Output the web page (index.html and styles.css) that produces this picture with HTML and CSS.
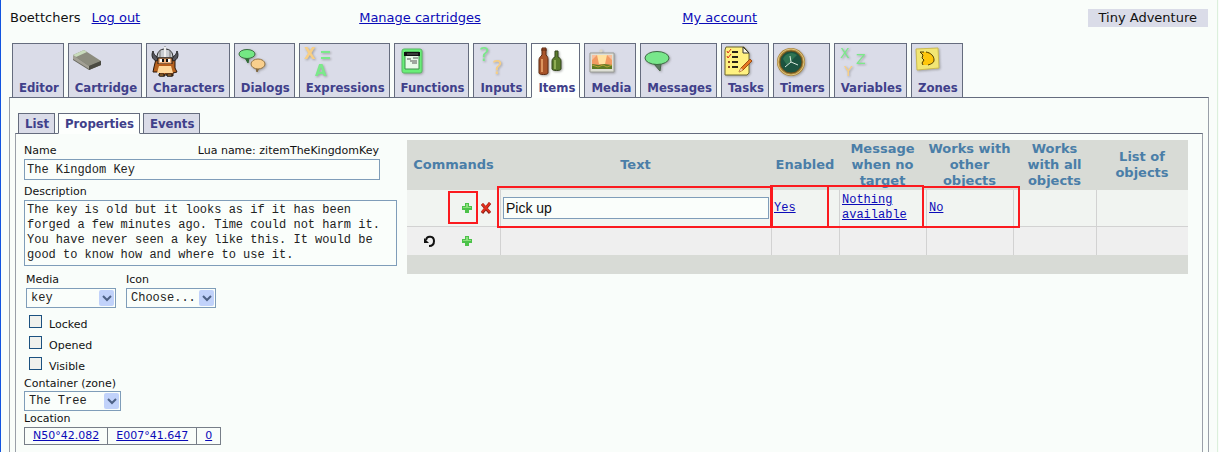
FILE: index.html
```html
<!DOCTYPE html>
<html lang="en">
<head>
<meta charset="utf-8">
<title>Tiny Adventure</title>
<link rel="stylesheet" href="styles.css">
</head>
<body>
<header class="topbar">
  <div class="user"><span>Boettchers</span><a href="#">Log out</a></div>
  <a href="#">Manage cartridges</a>
  <a href="#">My account</a>
  <div class="project">Tiny Adventure</div>
</header>

<nav class="tabs">
  <a class="tab" href="#">Editor</a>
  <a class="tab" href="#">
    <svg class="icon" viewBox="0 0 32 32"><path d="M1 10v4l16 10 12-5v-4z" fill="#66665d"/><path d="M1 9 12 4l17 11-12 5z" fill="#8c8c7e"/><path d="M1 9 12 4l3 2L4 11z" fill="#c9dcbc"/><path d="M17 20v4l12-5v-4z" fill="#4b4b42"/><path d="M1 9v4l16 10v-3z" fill="#a2a094"/></svg>
    Cartridge</a>
  <a class="tab" href="#">
    <svg class="icon" viewBox="0 0 32 32"><path d="M6 13 4 21l-1 5h5l2 2v2h5v-2h2v2h6v-3l4-1-2-4V13z" fill="#b5611e" stroke="#2b1608"/><path d="M3 5C1 9 2 14 7 15l2-4C6 11 4 9 3 5zM27 5c2 4 1 9-4 10l-2-4c3 0 5-2 6-6z" fill="#55555c" stroke="#222"/><path d="M7 12c0-6 3-9 8-9s8 3 8 9z" fill="#c9ccd0" stroke="#222"/><path d="M15 0v12M10 5v7M20 5v7" stroke="#777" fill="none"/><path d="M14 1h2v10h-2z" fill="#eee"/><path d="M8 12h14v6H8z" fill="#f0b27d" stroke="#2b1608"/><path d="M10 13h4v3h-4zM16 13h4v3h-4z" fill="#fff"/><path d="M12 13h2v3h-2zM16 13h2v3h-2z" fill="#111"/><path d="M8 18h14v2H8z" fill="#b65c1c"/><path d="M9 20h12l2 7H7z" fill="#ffd79b"/><path d="M9 28h5v2H9zM17 28h5v2h-5z" fill="#e89a3c" stroke="#111"/></svg>
    Characters</a>
  <a class="tab" href="#">
    <svg class="icon shaded" viewBox="0 0 32 32"><path d="M7 12l3 5 1-5z" fill="#2f6a35" stroke="#2f6a35"/><ellipse cx="9" cy="8" rx="8" ry="4.500" fill="#74e884" stroke="#3c6e42"/><path d="M18 22l1 4 2-4z" fill="#7c6238" stroke="#7c6238"/><ellipse cx="20" cy="18" rx="7" ry="5" fill="#f9cf8d" stroke="#927344"/></svg>
    Dialogs</a>
  <a class="tab" href="#">
    <svg class="icon shaded glyphs" viewBox="0 0 32 32"><text x="1" y="13" fill="#f8cf84">X</text><path d="M18 5h9v2h-9zM18 11h9v2h-9z" fill="#7be98a"/><text x="12" y="30" fill="#7be98a">A</text></svg>
    Expressions</a>
  <a class="tab" href="#">
    <svg class="icon shaded" viewBox="0 0 32 32"><rect x="4" y="3" width="20" height="24" rx="2" fill="#69ee78" stroke="#59ba64"/><path d="M7 6h14v17H7z" fill="#e8fae8" stroke="#3c8f48"/><path d="M6 6h16v4H6z" fill="#111"/><path d="M9 8h11" stroke="#666"/><path d="M9 13h4M15 12h5M12 15h7M14 17h5" stroke="#555" fill="none"/></svg>
    Functions</a>
  <a class="tab" href="#">
    <svg class="icon shaded glyphs" viewBox="0 0 32 32"><text x="2" y="15" class="big" fill="#7be98a">?</text><text x="15" y="28" class="big" fill="#f8cf84">?</text></svg>
    Inputs</a>
  <a class="tab active" href="#" aria-current="page">
    <svg class="icon shaded" viewBox="0 0 32 32"><path d="M7 2h4v7c2 2 2 3 2 5v13c0 2-9 2-9 0V14c0-2 1-3 3-5z" fill="#a9552a" stroke="#5d2a12"/><path d="M7 13v13" stroke="#dd955f" stroke-width="2"/><path d="M6 4h6" stroke="#5d2a12"/><path d="M20 5h3v6c2 1 3 2 3 4v8c0 2-9 2-9 0v-8c0-2 1-3 3-4z" fill="#5b7c2c" stroke="#33451c"/><path d="M20 14v9" stroke="#90ad55" stroke-width="2"/></svg>
    Items</a>
  <a class="tab" href="#">
    <svg class="icon shaded" viewBox="0 0 32 32"><path d="M13 3l2 2-2 2-2-2z" fill="#ddd7c6"/><path d="M2 7h24v19H2z" fill="#dedfd6" stroke="#9b9c97"/><path d="M4 9h20v14H4z" fill="#f29a62"/><path d="M9 9h10l-2 9h-6z" fill="#ffe1a0"/><path d="M4 9h5l-5 5zM24 9h-5l5 5z" fill="#f8bf9d"/><path d="M4 18l7 1 5-1 8 1v4H4z" fill="#5d7a24"/><path d="M4 19l6 2 5-2 4 2 5-2" stroke="#b8a434" fill="none"/></svg>
    Media</a>
  <a class="tab" href="#">
    <svg class="icon shaded" viewBox="0 0 32 32"><path d="M10 18l6 7 1-7z" fill="#5a7b5e" stroke="#476349"/><ellipse cx="13" cy="12" rx="12" ry="6.500" fill="#78e78b" stroke="#3d6a43"/></svg>
    Messages</a>
  <a class="tab" href="#">
    <svg class="icon shaded" viewBox="0 0 32 32"><path d="M1 1h18l5 6v20l-2 2H0V4z" fill="#fff181" stroke="#6d662f"/><path d="M18 1v6h6z" fill="#fffbe0" stroke="#333"/><path d="M7 6h6M7 11h6M7 16h6M7 21h6" stroke="#2b2418" stroke-width="2"/><path d="M2 5l1 2 3-4M2 10l1 2 3-4" stroke="#d5301f" fill="none"/><path d="M3 15h2v2H3zM3 20h2v2H3z" fill="#8e4c24"/><path d="M14 26l2-4 9-9 2 2-9 9z" fill="#e57a20" stroke="#9e4c13"/><path d="M14 26l2-4 2 2z" fill="#f4d39e"/></svg>
    Tasks</a>
  <a class="tab" href="#">
    <svg class="icon shaded" viewBox="0 0 32 32"><circle cx="14" cy="16" r="14" fill="#a98338"/><circle cx="14" cy="16" r="13" fill="none" stroke="#dfc681"/><circle cx="14" cy="16" r="11" fill="#1c5340" stroke="#68501d"/><path d="M6 13a9 9 0 0 1 14-4L10 19z" fill="#2f7452"/><path d="M14 16l-1-6M14 16l-6 5M14 16l7 3" stroke="#dcebe0" fill="none"/></svg>
    Timers</a>
  <a class="tab" href="#">
    <svg class="icon shaded glyphs" viewBox="0 0 32 32"><text x="2" y="12" class="thin" fill="#7be98a">X</text><text x="18" y="18" class="thin" fill="#7be98a">Z</text><text x="6" y="30" class="thin" fill="#f8cf84">Y</text></svg>
    Variables</a>
  <a class="tab" href="#">
    <svg class="icon shaded" viewBox="0 0 32 32"><path d="M1 3l22-1 1 20-22 2z" fill="#f2e674" stroke="#cdbb50"/><path d="M5 6h9l5 6v4l-6 3H8l-1-3 2-3-2-2 1-3z" fill="#ffc60b"/><path d="M5 6h4M5 6l3 3-1 3 2 2-2 3 1 2M11 6c5 1 8 4 8 8 0 3-3 4-6 5" stroke="#4c3900" fill="none"/></svg>
    Zones</a>
</nav>

<main class="panel">
  <nav class="subtabs">
    <a class="subtab" href="#">List</a>
    <a class="subtab active" href="#" aria-current="page">Properties</a>
    <a class="subtab" href="#">Events</a>
  </nav>

  <div class="content">
    <form class="props">
      <div class="name-row"><label for="name">Name</label><span>Lua name: zitemTheKingdomKey</span></div>
      <input class="name" id="name" type="text" value="The Kingdom Key">
      <label class="caption" for="desc">Description</label>
      <textarea class="desc" id="desc">The key is old but it looks as if it has been forged a few minutes ago. Time could not harm it. You have never seen a key like this. It would be good to know how and where to use it.</textarea>
      <div class="pair">
        <div>
          <label for="media">Media</label>
          <div class="drop"><select id="media"><option>key</option></select><svg viewBox="0 0 15 16"><rect width="15" height="16" rx="2"/><path d="M4 6l4 4 4-4"/></svg></div>
        </div>
        <div>
          <label for="icon">Icon</label>
          <div class="drop"><select id="icon"><option>Choose...</option></select><svg viewBox="0 0 15 16"><rect width="15" height="16" rx="2"/><path d="M4 6l4 4 4-4"/></svg></div>
        </div>
      </div>
      <div class="checks">
        <label><input type="checkbox"><span>Locked</span></label>
        <label><input type="checkbox"><span>Opened</span></label>
        <label><input type="checkbox"><span>Visible</span></label>
      </div>
      <label class="zone-label" for="zone">Container (zone)</label>
      <div class="drop zone"><select id="zone"><option>The Tree</option></select><svg viewBox="0 0 15 16"><rect width="15" height="16" rx="2"/><path d="M4 6l4 4 4-4"/></svg></div>
      <div class="location-label">Location</div>
      <table class="location">
        <tr><td><a href="#">N50°42.082</a></td><td><a href="#">E007°41.647</a></td><td><a href="#">0</a></td></tr>
      </table>
    </form>

    <div class="commands">
      <table class="grid">
        <colgroup><col class="c-cmd"><col><col class="c-enabled"><col class="c-msg"><col class="c-works"><col class="c-all"><col class="c-list"></colgroup>
        <thead>
          <tr><th>Commands</th><th>Text</th><th>Enabled</th><th>Message when no target</th><th>Works with other objects</th><th>Works with all objects</th><th>List of objects</th></tr>
        </thead>
        <tbody>
          <tr class="first">
            <td><div class="actions">
              <button type="button" class="add" aria-label="Add"><svg viewBox="0 0 12 12"><path d="M4 1h4v3h3v4H8v3H4V8H1V4h3z" fill="#4cc24a"/><path d="M5 2h2v3h3v1H2V5h3z" fill="#8be07c"/></svg></button>
              <button type="button" aria-label="Delete"><svg viewBox="0 0 12 12"><path d="M2 2l8 9M10 1 2 11" stroke="#8d1b12" stroke-width="3"/><path d="M2 2l8 8M10 1 2 10" stroke="#e0301e" stroke-width="2"/></svg></button>
            </div></td>
            <td><input class="cmd-text" type="text" value="Pick up" aria-label="Text"></td>
            <td><a href="#">Yes</a></td>
            <td><a href="#">Nothing available</a></td>
            <td><a href="#">No</a></td>
            <td></td>
            <td></td>
          </tr>
          <tr class="second">
            <td><div class="actions">
              <button type="button" aria-label="Undo"><svg viewBox="0 0 12 12"><path d="M3 5c1-5 8-4 8 1 0 3-2 5-5 5" fill="none" stroke="#111" stroke-width="2"/><path d="M1 3v5h5z" fill="#111"/></svg></button>
              <button type="button" class="add" aria-label="Add"><svg viewBox="0 0 12 12"><path d="M4 1h4v3h3v4H8v3H4V8H1V4h3z" fill="#4cc24a"/><path d="M5 2h2v3h3v1H2V5h3z" fill="#8be07c"/></svg></button>
            </div></td>
            <td></td><td></td><td></td><td></td><td></td><td></td>
          </tr>
        </tbody>
        <tfoot><tr><td colspan="7"></td></tr></tfoot>
      </table>
      <span class="mark mark-add"></span>
      <span class="mark mark-text"></span>
      <span class="mark mark-enabled"></span>
      <span class="mark mark-message"></span>
      <span class="mark mark-works"></span>
    </div>
  </div>
</main>
</body>
</html>
```
FILE: styles.css
```css
* { box-sizing: border-box; }

body {
  margin: 0 1px 0 0;
  min-height: 100vh;
  display: flex;
  flex-direction: column;
  background: #f9fdfa;
  border-left: 1px solid #1254e0;
  border-right: 1px solid #dcf0dc;
  color: #111;
  font: 13px/18px "DejaVu Sans", sans-serif;
}

a { color: #0b0bb8; }

.topbar {
  display: grid;
  grid-template-columns: 349fr 323fr 405fr auto;
  padding: 9px 9px 16px;
}
.user { display: flex; gap: 11px; }
.project { padding: 0 11px; background: #dadce8; }

.tabs {
  display: flex;
  gap: 4px;
  margin: 0 10px -1px 11px;
  position: relative;
}
.tab, .subtab {
  border: 1px solid #656c7e;
  background: #dadce8;
  color: #40408a;
  font: bold 13px/16px "DejaVu Sans Condensed", "DejaVu Sans", sans-serif;
  text-decoration: none;
}
.tab {
  display: flex;
  flex-direction: column;
  justify-content: flex-end;
  min-height: 55px;
  padding: 0 4px 1px 6px;
}
.tab.active, .subtab.active { background: #fdfffd; border-bottom-color: #fdfffd; }

.icon { width: 32px; height: 32px; margin: 0 0 2px -3px; overflow: visible; }
.shaded { filter: drop-shadow(1px 1px 1px #77777799); }
.glyphs { font: bold 15px "DejaVu Sans", sans-serif; }
.glyphs .big { font-size: 20px; font-weight: normal; }
.glyphs .thin { font-size: 14px; font-weight: normal; }

.panel {
  flex: 1;
  display: flex;
  flex-direction: column;
  margin: 0 8px;
  padding: 15px 5px 0;
  border: 1px solid #656c7e;
  border-color: #656c7e #9a9fa8;
  border-bottom: 0;
}
.subtabs {
  display: flex;
  gap: 3px;
  margin: 0 3px -1px;
  position: relative;
}
.subtab { padding: 2px 5px 1px 6px; }

.content {
  flex: 1;
  display: flex;
  align-items: flex-start;
  gap: 10px;
  padding: 6px 14px 6px 8px;
  border: 1px solid #656c7e;
  border-color: #656c7e #9a9fa8;
  border-bottom: 0;
}

.props {
  flex: 0 0 373px;
  padding-top: 3px;
  font-size: 11px;
  line-height: 16px;
}
.props label { display: block; }
.name-row { display: flex; justify-content: space-between; margin-right: 18px; }
input, textarea, select {
  margin: 0;
  border: 1px solid #7f9db9;
  border-radius: 0;
  background: #fafefb;
  color: #222;
  font: 12px/15px "Liberation Mono", monospace;
}
.name { display: block; width: 356px; height: 21px; padding: 1px 2px; }
.caption { margin-top: 4px; }
.desc {
  display: block;
  width: 100%;
  height: 66px;
  padding: 2px;
  resize: none;
  overflow: hidden;
}
.pair { display: flex; gap: 10px; margin: 6px 0 6px 2px; }
.drop { position: relative; width: 90px; }
.drop select { display: block; appearance: none; width: 100%; height: 20px; padding: 0 18px 0 4px; }
.drop svg { position: absolute; top: 2px; right: 2px; width: 15px; height: 16px; pointer-events: none; }
.drop rect { fill: #c1d2fa; }
.drop path { fill: none; stroke: #4d6185; stroke-width: 2; }
.zone { width: 97px; }
.checks label { display: flex; gap: 7px; height: 21px; padding: 1px 0 0 5px; }
.checks span { padding-top: 2px; }
.checks input {
  appearance: none;
  width: 13px;
  height: 13px;
  border: 1px solid #1c5180;
  background: #f0f1ed;
}
.props .zone-label { line-height: 14px; }

.location { border-collapse: collapse; line-height: 16px; }
.location td { border: 1px solid #777e88; padding: 0 8px; }

.commands { flex: 1; position: relative; }
.grid { width: 100%; table-layout: fixed; border-spacing: 0; font: 12px/15px "Liberation Mono", monospace; }
.c-cmd { width: 93px; }
.c-enabled { width: 68px; }
.c-msg, .c-works { width: 87px; }
.c-all { width: 83px; }
.c-list { width: 92px; }
.grid th {
  height: 50px;
  padding: 0 2px;
  background: #d8dbd6;
  color: #4a7ea8;
  font: bold 13px/16px "DejaVu Sans", sans-serif;
}
.grid td { padding: 0 2px; }
.grid tbody td + td { border-left: 1px solid #d2d2d2; }
.first td { height: 37px; background: #f1f4f1; border-bottom: 1px solid #d2d2d2; }
.second td { height: 28px; background: #efefef; }
.grid tfoot td { height: 19px; background: #d8dbd6; }
.actions { display: grid; grid-template-columns: repeat(4, 19px); padding-left: 10px; }
.actions button { display: grid; place-items: center; height: 19px; padding: 0; border: 0; background: none; }
.actions .add { grid-column: 3; }
.actions svg { width: 12px; height: 12px; }
.cmd-text { display: block; width: 100%; height: 22px; padding: 0 2px; font: 14px "Liberation Sans", sans-serif; color: #111; }

.mark { position: absolute; border: 2px solid #fb1a1f; pointer-events: none; }
.mark-add { left: 41px; top: 51px; width: 30px; height: 33px; }
.mark-text { left: 90px; right: 415px; top: 46px; height: 42px; }
.mark-enabled { right: 359px; top: 45px; width: 59px; height: 43px; }
.mark-message { right: 264px; top: 45px; width: 97px; height: 43px; }
.mark-works { right: 168px; top: 46px; width: 98px; height: 42px; }
```
